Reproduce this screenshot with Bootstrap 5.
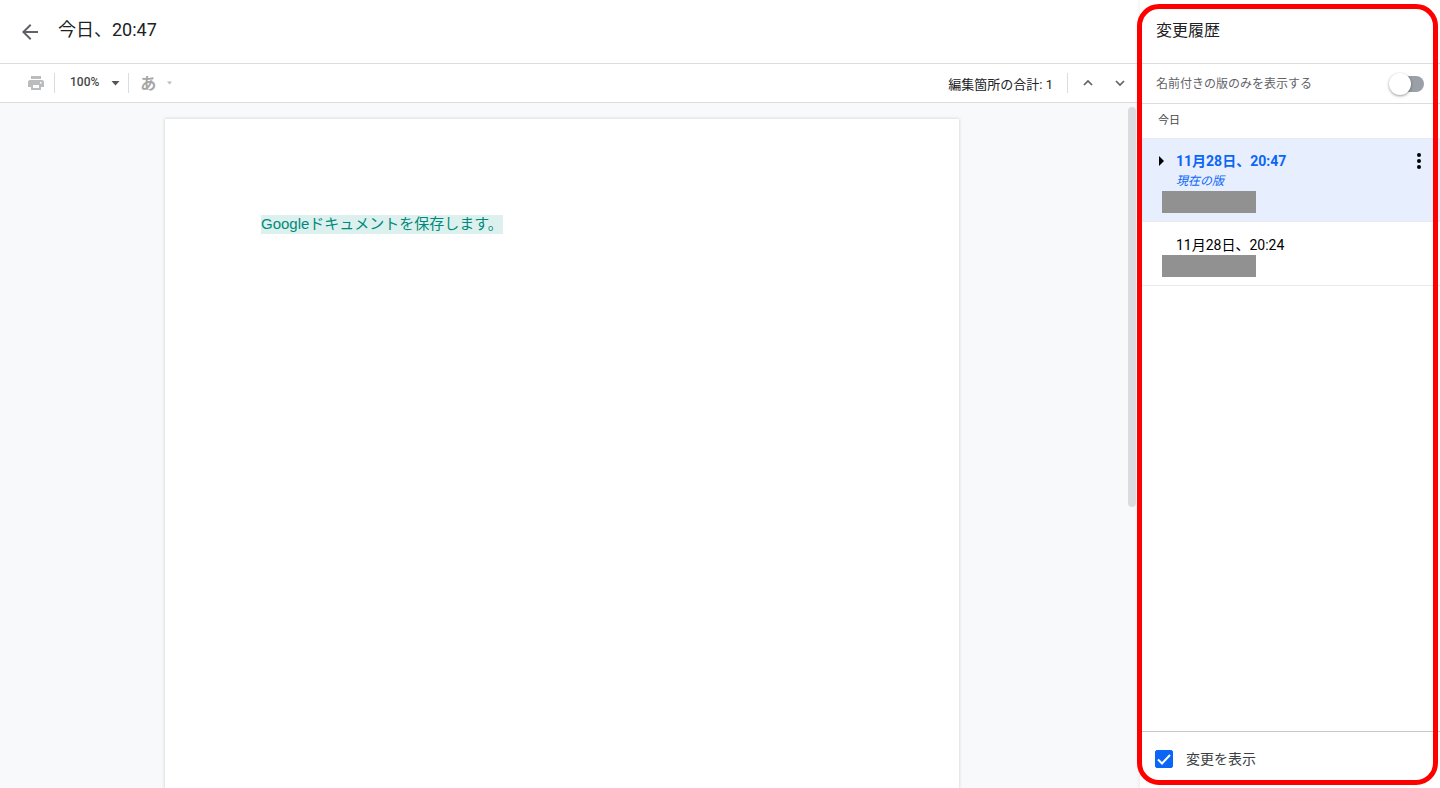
<!DOCTYPE html>
<html lang="ja">
<head>
<meta charset="utf-8">
<meta name="viewport" content="width=device-width, initial-scale=1">
<title>変更履歴</title>
<link href="https://cdn.jsdelivr.net/npm/bootstrap@5.3.0/dist/css/bootstrap.min.css" rel="stylesheet">
<style>
  body { font-family: Roboto, "Noto Sans CJK JP", sans-serif; font-size: 14px; line-height: 20px; color: #202124; background: #fff; }
  .btn { --bs-btn-padding-x: 0; --bs-btn-padding-y: 0; --bs-btn-border-width: 0; --bs-btn-font-size: 12px; line-height: 20px; }
  .btn svg, .entry svg { display: block; }
  .rule-b { border-bottom: 1px solid #dadce0; }
  .titlebar { height: 64px; padding: 0 18px 4px; }
  .titlebar h1 { font-size: 18px; line-height: 24px; }
  .toolstrip { height: 39px; padding: 0 8px 0 24px; }
  .divider { width: 1px; height: 20px; background: #dadce0; }
  .print { margin-right: 6px; }
  .zoom-menu { color: #444746; font-weight: 500; margin-left: 15px; margin-right: 8px; gap: 12px; }
  .zoom-menu span { padding-bottom: 2px; }
  .input-menu { color: #a6a6a6; margin-left: 11px; gap: 10px; font-size: 16px; font-weight: 700; }
  .input-menu span { padding-top: 2px; }
  .edits { font-size: 13px; padding-top: 3px; margin-right: 14px; }
  .canvas { background: #f8f9fa; padding: 16px 16px 0 0; }
  .sheet { max-width: 794px; padding: 96px; background: #fff; box-shadow: 0 0 3px rgba(60,64,67,.25); }
  .sheet p { font-family: "Liberation Sans", "Noto Sans CJK JP", sans-serif; font-size: 15px; line-height: 18px; color: #00897b; }
  .sheet ins { display: inline-block; padding-bottom: 1px; background: #dcf1ee; text-decoration: none; }
  .thumb { top: 4px; right: 4px; width: 8px; height: 400px; border-radius: 4px; background: #dadce0; }
  .history { flex: 0 0 300px; background: #fff; box-shadow: 0 0 4px rgba(60,64,67,.12); }
  .history h2 { height: 64px; padding: 19px 16px 0; font-size: 16px; line-height: 24px; }
  .named { height: 40px; padding: 0 16px; font-size: 12px; color: #5f6368; }
  .named .form-check-input { width: 32px; height: 16px; margin: 1px 0 0; border: 0; border-radius: 8px; background: #9aa0a6; position: relative; }
  .named .form-check-input::before { content: ""; position: absolute; left: -3px; top: -3px; width: 22px; height: 22px; border-radius: 50%; background: #fff; box-shadow: 0 1px 3px rgba(0,0,0,.4); }
  .day { height: 34px; padding-left: 18px; font-size: 11px; line-height: 34px; font-weight: 400; color: #444746; }
  .entry { padding: 12px 16px 8px; color: #000; border-bottom: 1px solid #e8eaed; }
  .entry.current { background: #e7eefe; border-top: 1px solid #e8eaed; }
  .entry.current .stamp { height: 20px; }
  .entry .stamp { height: 21px; }
  .entry .caret { width: 20px; }
  .caret svg { margin-left: 3px; }
  .current .date { color: #0b66f5; font-weight: 700; }
  .current em { font-size: 12px; color: #0b66f5; margin-left: 20px; }
  .editor { width: 94px; height: 22px; margin-left: 6px; background: #919191; }
  .foot { height: 57px; padding: 0 15px 2px; gap: 13px; border-top: 1px solid #c7c7c7; color: #3c4043; }
  .foot .form-check-input { width: 18px; height: 18px; margin: 0; border-radius: 2px; }
  .foot .form-check-input:checked { background-color: #0b66f5; border-color: #0b66f5; background-image: url("data:image/svg+xml,%3csvg xmlns='http://www.w3.org/2000/svg' viewBox='0 0 16 16'%3e%3cpath fill='none' stroke='%23fff' stroke-width='2' d='m2 8.500 4 4L14 4'/%3e%3c/svg%3e"); }
  .callout { inset: 4px 2px 3px -3px; border: 5px solid #f00; border-radius: 22px; pointer-events: none; }
</style>
</head>
<body>
<div class="d-flex vh-100 overflow-hidden">
  <main class="d-flex flex-column flex-grow-1 overflow-hidden">
    <header class="titlebar rule-b d-flex align-items-center">
      <button class="btn pt-1" type="button" aria-label="戻る">
        <svg width="24" height="24" viewBox="0 0 24 24" fill="#5f6368"><path d="M20 11H7.83l5.59-5.59L12 4l-8 8 8 8 1.41-1.41L7.83 13H20z"/></svg>
      </button>
      <h1 class="mb-0 ms-3 fw-normal">今日、20:47</h1>
    </header>
    <div class="toolstrip rule-b d-flex align-items-center flex-shrink-0" role="toolbar" aria-label="ツールバー">
      <button class="btn print px-1" type="button" aria-label="印刷">
        <svg width="16" height="16" viewBox="0 0 16 16" fill="#babcbe"><path d="M3 1h10v3H3z"/><path fill-rule="evenodd" d="M2 5h12a2 2 0 0 1 2 2v5h-3v3H3v-3H0V7a2 2 0 0 1 2-2zm3 5v3h6v-3zM12 7v1.500h1.500V7z"/></svg>
      </button>
      <div class="divider"></div>
      <button class="btn zoom-menu d-flex align-items-center" type="button"><span>100%</span>
        <svg width="9" height="5" viewBox="0 0 9 5" fill="#50555a"><path d="M.5 0h8l-4 4.500z"/></svg>
      </button>
      <div class="divider"></div>
      <button class="btn input-menu d-flex align-items-center" type="button"><span>あ</span>
        <svg width="7" height="4" viewBox="0 0 7 4" fill="#babcbe"><path d="M1 .5h5L3.500 3.500z"/></svg>
      </button>
      <span class="edits ms-auto">編集箇所の合計: 1</span>
      <div class="divider"></div>
      <button class="btn ms-2 px-1" type="button" aria-label="前の編集">
        <svg width="16" height="16" viewBox="0 0 16 16" fill="none" stroke="#5f6368" stroke-width="1.700"><path d="m4 10 4-4 4 4"/></svg>
      </button>
      <button class="btn ms-2 px-1" type="button" aria-label="次の編集">
        <svg width="16" height="16" viewBox="0 0 16 16" fill="none" stroke="#5f6368" stroke-width="1.700"><path d="m4 6 4 4 4-4"/></svg>
      </button>
    </div>
    <div class="canvas position-relative d-flex flex-grow-1">
      <article class="sheet w-100 mx-auto"><p class="mb-0"><ins>Googleドキュメントを保存します。</ins></p></article>
      <div class="thumb position-absolute"></div>
    </div>
  </main>

  <aside class="history position-relative d-flex flex-column">
    <h2 class="rule-b mb-0 fw-normal flex-shrink-0">変更履歴</h2>
    <div class="named rule-b form-switch d-flex align-items-center justify-content-between flex-shrink-0">
      <label for="named-only">名前付きの版のみを表示する</label>
      <input class="form-check-input" type="checkbox" role="switch" id="named-only">
    </div>
    <h3 class="day mb-0">今日</h3>
    <ul class="list-unstyled mb-0 flex-grow-1">
      <li class="entry current">
        <div class="stamp d-flex align-items-center">
          <button class="btn caret" type="button" aria-label="展開"><svg width="6" height="10" viewBox="0 0 6 10"><path d="M0 0v10l5-5z"/></svg></button>
          <span class="date flex-grow-1">11月28日、20:47</span>
          <button class="btn" type="button" aria-label="その他の操作"><svg width="10" height="18" viewBox="0 0 10 18"><circle cx="5" cy="3" r="2"/><circle cx="5" cy="9" r="2"/><circle cx="5" cy="15" r="2"/></svg></button>
        </div>
        <em class="d-block">現在の版</em>
        <div class="editor"></div>
      </li>
      <li class="entry">
        <div class="stamp d-flex align-items-center"><span class="caret"></span><span class="date">11月28日、20:24</span></div>
        <div class="editor"></div>
      </li>
    </ul>
    <div class="foot d-flex align-items-center flex-shrink-0">
      <input class="form-check-input" type="checkbox" id="show-changes" checked>
      <label for="show-changes">変更を表示</label>
    </div>
    <div class="callout position-absolute"></div>
  </aside>
</div>
<script src="https://cdn.jsdelivr.net/npm/bootstrap@5.3.0/dist/js/bootstrap.bundle.min.js"></script>
</body>
</html>
